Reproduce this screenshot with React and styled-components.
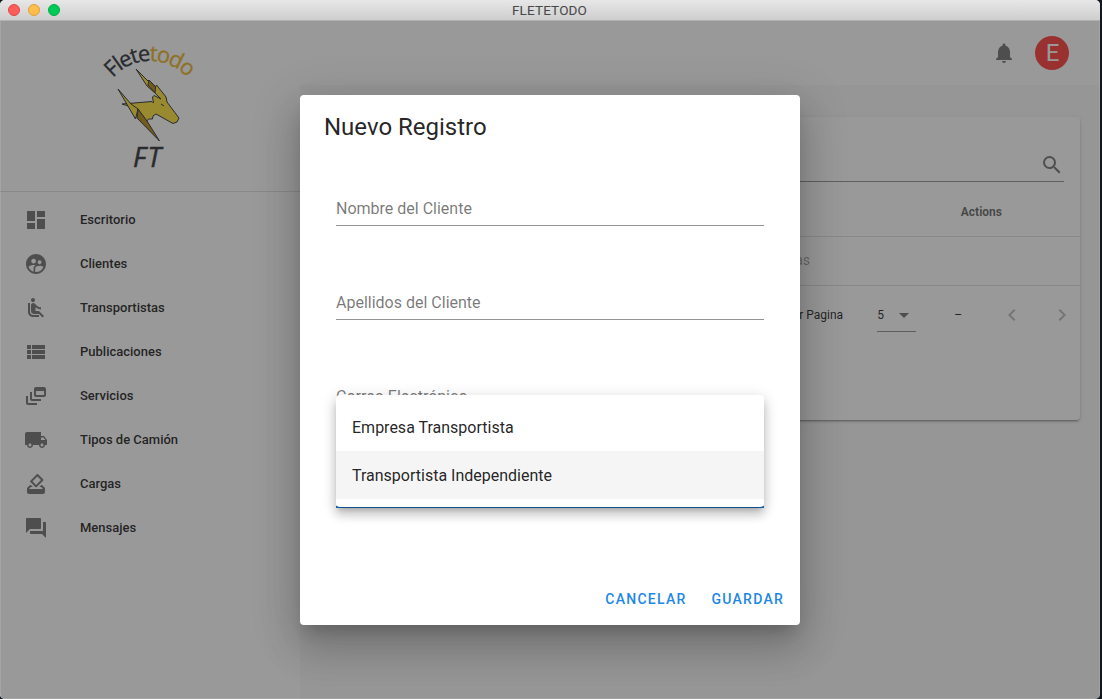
import React from 'react';
import styled, { createGlobalStyle } from 'styled-components';
import {
  MdDashboard, MdSupervisedUserCircle, MdAirlineSeatReclineNormal, MdViewList, MdDynamicFeed,
  MdLocalShipping, MdHowToVote, MdQuestionAnswer, MdNotifications, MdSearch, MdArrowDropDown,
  MdChevronLeft, MdChevronRight,
} from 'react-icons/md';

const Global = createGlobalStyle`
  * { box-sizing: border-box; }
  body { margin: 0; background: #12161d; font-family: Roboto, sans-serif; color: rgba(0,0,0,.87); overflow: hidden; }
`;
const Window = styled.div`
  width: 1100px; height: 699px; border-radius: 5px; overflow: hidden;
  display: flex; flex-direction: column; background: #fafafa; position: relative;
`;
const TitleBar = styled.div`
  height: 21px; flex: none; display: grid; grid-template-columns: 1fr auto 1fr; align-items: center;
  padding: 0 8px; background: linear-gradient(#e7e7e7, #cecece); border-bottom: 1px solid #b0b0b0;
`;
const Lights = styled.div`display: flex; gap: 8px;`;
const Light = styled.i`
  width: 12px; height: 12px; border-radius: 50%; background: ${p => p.$color}; border: 1px solid ${p => p.$edge};
`;
const WindowTitle = styled.div`font-size: 13.5px; line-height: 20px; padding-right: 1px; letter-spacing: .15px; color: #484848;`;
const Body = styled.div`flex: 1; display: flex; position: relative; min-height: 0;`;
const Drawer = styled.nav`width: 300px; background: #fff; flex: none;`;
const Brand = styled.div`
  height: 171px; border-bottom: 1px solid rgba(0,0,0,.12); display: flex; justify-content: center;
  svg { display: block; }
`;
const Menu = styled.div`padding-top: 5px;`;
const MenuItem = styled.a`
  height: 44px; display: flex; align-items: center; gap: 32px; padding-left: 24px;
  font-size: 13px; font-weight: 500;
  svg { width: 24px; height: 24px; margin-top: 2px; color: rgba(0,0,0,.54); }
`;
const Main = styled.main`flex: 1; display: flex; flex-direction: column;`;
const AppBar = styled.header`
  height: 64px; background: #fff; display: flex; align-items: center; justify-content: flex-end;
  gap: 19px; padding-right: 31px; flex: none;
  svg { width: 24px; height: 24px; color: rgba(0,0,0,.54); }
`;
const Avatar = styled.div`
  width: 34px; height: 34px; border-radius: 50%; background: #ff4040; color: #fff;
  display: flex; align-items: center; justify-content: center; font-size: 24px; padding-left: 1px;
`;
const Card = styled.section`
  margin: 32px 20px 0; height: 303px; background: #fff; border-radius: 4px;
  box-shadow: 0 3px 1px -2px rgba(0,0,0,.2), 0 2px 2px rgba(0,0,0,.14), 0 1px 5px rgba(0,0,0,.12);
`;
const Search = styled.div`
  height: 65px; margin: 0 16px; border-bottom: 1px solid rgba(0,0,0,.42);
  display: flex; justify-content: flex-end; align-items: flex-end; padding: 0 0 4px;
  svg { width: 24px; height: 24px; color: rgba(0,0,0,.54); }
`;
const HeadRow = styled.div`
  height: 55px; border-bottom: 1px solid rgba(0,0,0,.12); padding: 6px 78px 0 0;
  text-align: right; font-size: 12px; line-height: 48px; font-weight: 700; color: rgba(0,0,0,.6);
`;
const EmptyRow = styled.div`
  height: 49px; border-bottom: 1px solid rgba(0,0,0,.12); padding-right: 270px;
  text-align: right; font-size: 14px; line-height: 47px; color: rgba(0,0,0,.38);
`;
const Pager = styled.div`
  height: 58px; display: flex; align-items: center; justify-content: flex-end; font-size: 12px; padding-right: 6px;
`;
const PageSize = styled.div`
  margin: 0 38px 0 34px; width: 39px; height: 33px; border-bottom: 1px solid rgba(0,0,0,.42);
  display: flex; align-items: center; justify-content: space-between;
  svg { width: 24px; height: 24px; color: rgba(0,0,0,.54); flex: none; }
`;
const Chevron = styled.button`
  border: 0; background: none; padding: 0; width: 24px; height: 24px; margin-left: ${p => p.$gap}px; color: rgba(0,0,0,.26);
  svg { width: 24px; height: 24px; display: block; }
`;
const Scrim = styled.div`
  position: absolute; inset: 0; background: rgba(33,33,33,.46); display: flex; justify-content: center; align-items: center;
  box-shadow: inset 1px -1px rgba(255,255,255,.12), inset -1px 0 rgba(255,255,255,.12);
`;
const Dialog = styled.div`
  width: 500px; height: 530px; background: #fff; border-radius: 4px; position: relative;
  display: flex; flex-direction: column;
  box-shadow: 0 11px 15px -7px rgba(0,0,0,.2), 0 24px 38px 3px rgba(0,0,0,.14), 0 9px 46px 8px rgba(0,0,0,.12);
`;
const DialogTitle = styled.h2`
  margin: 0; padding: 16px 24px 10px; font-size: 24px; line-height: 32px; font-weight: 400;
`;
const Form = styled.div`flex: 1; padding: 40px 36px 0;`;
const Field = styled.div`
  height: 33px; margin-bottom: 61px; border-bottom: 1px solid rgba(0,0,0,.42);
  font-size: 16px; line-height: 31px; color: rgba(0,0,0,.54);
`;
const SelectField = styled.div`height: 33px; border-bottom: 2px solid #1976d2;`;
const Actions = styled.div`
  height: 52px; padding: 8px; display: flex; justify-content: flex-end; gap: 8px;
`;
const TextButton = styled.button`
  border: 0; background: none; height: 36px; padding: 0 8px; margin-left: 1px; font: 500 14px Roboto, sans-serif;
  letter-spacing: 1.25px; color: #1e88e5;
`;
const Options = styled.div`
  position: absolute; left: 36px; top: 300px; width: 428px; height: 112px; padding: 8px 0; background: #fff; border-radius: 4px;
  box-shadow: 0 5px 5px -3px rgba(0,0,0,.2), 0 8px 10px 1px rgba(0,0,0,.14), 0 3px 14px 2px rgba(0,0,0,.12);
`;
const Option = styled.div`
  height: 48px; line-height: 48px; padding: 1px 16px 0; font-size: 16px;
  background: ${p => (p.$active ? '#f5f5f5' : '#fff')};
`;

const entries = [
  ['Escritorio', MdDashboard], ['Clientes', MdSupervisedUserCircle], ['Transportistas', MdAirlineSeatReclineNormal],
  ['Publicaciones', MdViewList], ['Servicios', MdDynamicFeed], ['Tipos de Camión', MdLocalShipping],
  ['Cargas', MdHowToVote], ['Mensajes', MdQuestionAnswer],
];

const Logo = () => (
  <svg width="120" height="160" viewBox="90 21 120 160" fontFamily="Open Sans, sans-serif">
    <defs><path id="arc" d="M113 78 A49.500 49.500 0 0 1 197 94" /></defs>
    <text fontSize="22" fill="#30343b" stroke="#30343b" strokeWidth=".3" letterSpacing="-1.65"><textPath href="#arc">Flete<tspan fill="#eab528" stroke="#eab528">todo</tspan></textPath></text>
    <g stroke="#30343b" strokeWidth="1" strokeLinejoin="round">
      <path fill="#ffe23c" d="M122 104 L152 101.500 L153.500 103 L152.500 97 L154 95.500 L161 99 L155 93 L147 86 L136 69 L148 81 L149 80 L155.500 87 L156.500 85 L166 97 L167 102 L179 118 L177 122 L173 123.500 L156 114 L153 116 L152.500 119 L148.500 119 L146 122 L138 109Z" />
      <path fill="#b98d1c" d="M149 80 L155.500 87 L155 93 L148 85Z" />
      <path fill="#ffe23c" d="M118 89 L131 104 L138 109 L135.500 119Z" />
      <path fill="#b98d1c" d="M138 109 L147 121 L159.500 141 L137 118Z" />
      <path d="M161 104 L164 106" />
    </g>
    <text x="133" y="167" fontSize="27" fontStyle="italic" fill="#30343b" stroke="#30343b" strokeWidth=".5" textLength="28">FT</text>
  </svg>
);

export default function App() {
  return (
    <>
      <Global />
      <Window>
        <TitleBar>
          <Lights>
            <Light $color="#ff5c5c" $edge="#e04848" />
            <Light $color="#ffbd4c" $edge="#df9f38" />
            <Light $color="#00ca56" $edge="#00ad45" />
          </Lights>
          <WindowTitle>FLETETODO</WindowTitle>
        </TitleBar>
        <Body>
          <Drawer>
            <Brand><Logo /></Brand>
            <Menu>
              {entries.map(([name, Icon]) => <MenuItem key={name}><Icon />{name}</MenuItem>)}
            </Menu>
          </Drawer>
          <Main>
            <AppBar><MdNotifications /><Avatar>E</Avatar></AppBar>
            <Card>
              <Search><MdSearch /></Search>
              <HeadRow>Actions</HeadRow>
              <EmptyRow>No se encontraron filas</EmptyRow>
              <Pager>
                Filas por Pagina
                <PageSize>5<MdArrowDropDown /></PageSize>
                –
                <Chevron $gap={38}><MdChevronLeft /></Chevron>
                <Chevron $gap={26}><MdChevronRight /></Chevron>
              </Pager>
            </Card>
          </Main>
          <Scrim>
            <Dialog>
              <DialogTitle>Nuevo Registro</DialogTitle>
              <Form>
                <Field>Nombre del Cliente</Field>
                <Field>Apellidos del Cliente</Field>
                <Field>Correo Electrónico</Field>
                <SelectField />
              </Form>
              <Actions>
                <TextButton>CANCELAR</TextButton>
                <TextButton>GUARDAR</TextButton>
              </Actions>
              <Options>
                <Option>Empresa Transportista</Option>
                <Option $active>Transportista Independiente</Option>
              </Options>
            </Dialog>
          </Scrim>
        </Body>
      </Window>
    </>
  );
}
